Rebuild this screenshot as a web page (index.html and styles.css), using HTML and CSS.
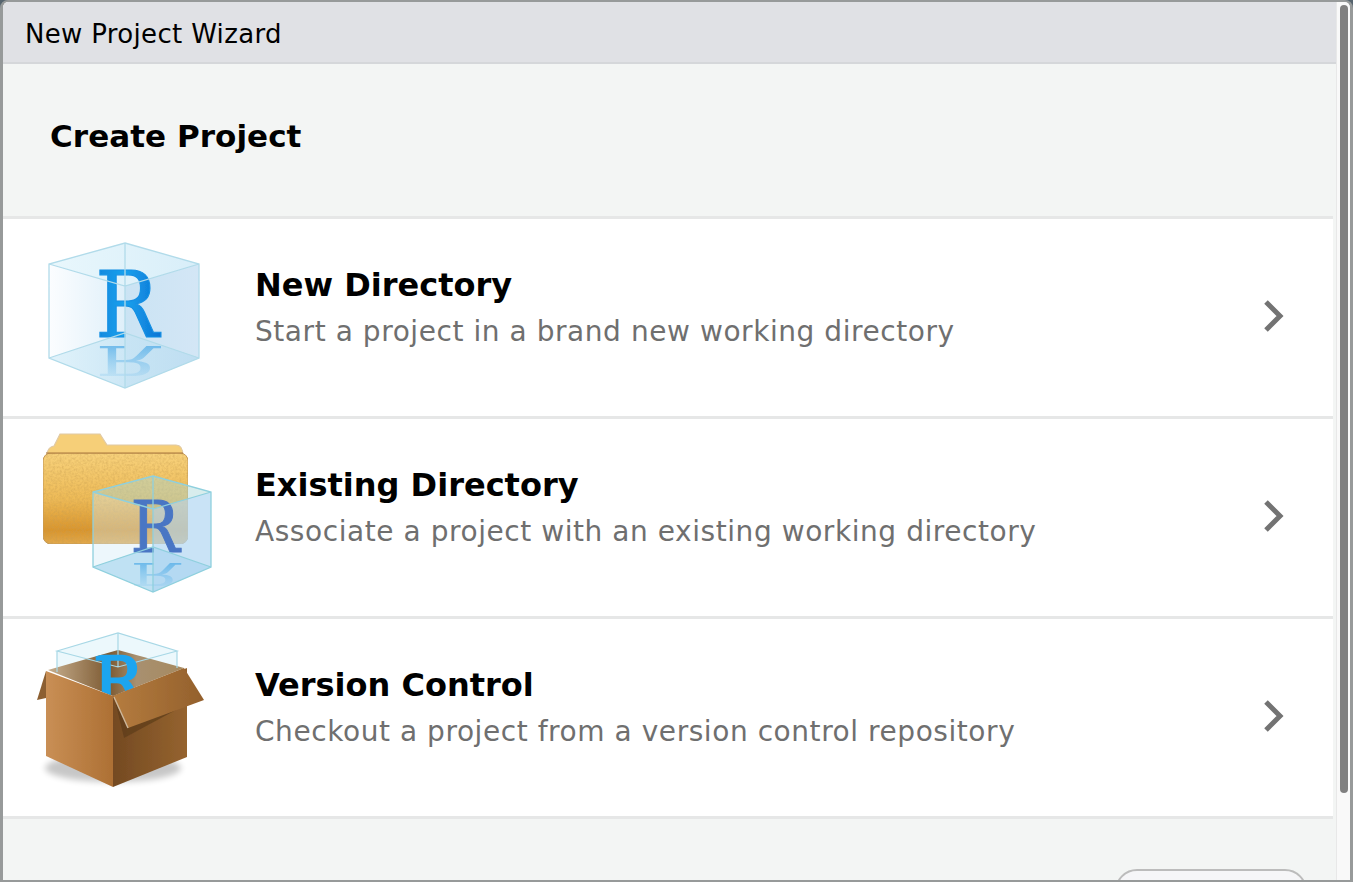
FILE: index.html
```html
<!DOCTYPE html>
<html lang="en">
<head>
<meta charset="utf-8">
<title>New Project Wizard</title>
<link rel="stylesheet" href="styles.css">
</head>
<body>
<svg class="defs" width="0" height="0" aria-hidden="true">
  <defs>
    <linearGradient id="leftFace" x1="0" x2="1" y1="0" y2="0"><stop offset="0" stop-color="#fbfdff"/><stop offset="1" stop-color="#d9edf9"/></linearGradient>
    <linearGradient id="rightFace" x1="0" x2="1" y1="0" y2="0"><stop offset="0" stop-color="#c5e1f3"/><stop offset="1" stop-color="#cfe4f5"/></linearGradient>
    <linearGradient id="topFace" x1="0" x2="1" y1="0" y2="0"><stop offset="0" stop-color="#e9f7fc"/><stop offset="1" stop-color="#d8eef9"/></linearGradient>
    <linearGradient id="floorFace" x1="0" x2="1" y1="0" y2="0"><stop offset="0" stop-color="#d8eff9"/><stop offset="1" stop-color="#b9dcf0"/></linearGradient>
    <linearGradient id="rBlue" x1="0" x2="1" y1="0" y2="0"><stop offset="0" stop-color="#0f86dc"/><stop offset=".45" stop-color="#1aa2ee"/><stop offset="1" stop-color="#0b74d4"/></linearGradient>
    <linearGradient id="rFade" x1="0" x2="0" y1="0" y2="1"><stop offset="0" stop-color="#8ccbef" stop-opacity=".1"/><stop offset="1" stop-color="#4aa8e6" stop-opacity=".95"/></linearGradient>
    <linearGradient id="folderFront" x1="0" x2="0" y1="0" y2="1"><stop offset="0" stop-color="#f8d27c"/><stop offset=".5" stop-color="#eebb58"/><stop offset=".85" stop-color="#d9952d"/><stop offset="1" stop-color="#e2a94c"/></linearGradient>
    <linearGradient id="boxLeft" x1="0" x2="1" y1="0" y2="0"><stop offset="0" stop-color="#c98f55"/><stop offset="1" stop-color="#ad7034"/></linearGradient>
    <linearGradient id="boxRight" x1="0" x2="1" y1="0" y2="0"><stop offset="0" stop-color="#744a22"/><stop offset="1" stop-color="#95632f"/></linearGradient>
    <linearGradient id="boxFlap" x1="0" x2="1" y1="0" y2="0"><stop offset="0" stop-color="#b57c3f"/><stop offset="1" stop-color="#93602c"/></linearGradient>
    <linearGradient id="boxInside" x1="0" x2="1" y1="0" y2="0"><stop offset="0" stop-color="#c6ae8e"/><stop offset=".45" stop-color="#7d5a32"/><stop offset=".65" stop-color="#a89070"/><stop offset="1" stop-color="#a68a60"/></linearGradient>
    <filter id="soft" x="-5%" y="-5%" width="110%" height="110%"><feGaussianBlur stdDeviation=".45"/></filter>
    <filter id="shadow" x="-20%" y="-50%" width="140%" height="200%"><feGaussianBlur stdDeviation="3"/></filter>
    <filter id="grain" x="0" y="0" width="100%" height="100%">
      <feTurbulence type="fractalNoise" baseFrequency=".45" numOctaves="2" seed="4"/>
      <feColorMatrix values="0 0 0 0 .55  0 0 0 0 .33  0 0 0 0 .08  .9 0 0 0 -.32"/>
      <feComposite in2="SourceAlpha" operator="in"/>
      <feMerge><feMergeNode in="SourceGraphic"/><feMergeNode/></feMerge>
    </filter>
  </defs>
</svg>
<div class="window">
  <main class="dialog">
    <div class="titlebar">New Project Wizard</div>
    <div class="header"><h1 class="header-title">Create Project</h1></div>
    <ul class="options">
      <li class="option">
        <svg class="option-icon" viewBox="30 219 190 200" aria-hidden="true">
          <g filter="url(#soft)">
            <polygon points="49,358 125,333 199,358 125,388" fill="url(#floorFace)"/>
            <polygon points="49,264 125,286 125,388 49,358" fill="url(#leftFace)" opacity=".85"/>
            <polygon points="125,286 199,264 199,358 125,388" fill="url(#rightFace)" opacity=".9"/>
            <polygon points="125,243 199,264 125,286 49,264" fill="url(#topFace)"/>
            <polygon points="49,358 125,333 199,358 125,388" fill="url(#floorFace)" opacity=".7"/>
            <text class="logo-r" transform="translate(127 337) scale(.92 1)" text-anchor="middle" font-size="92" fill="url(#rBlue)" stroke="#1590e4" stroke-width="1.2">R</text>
            <text class="logo-r" transform="translate(127 346) scale(.92 -.45)" text-anchor="middle" font-size="92" fill="url(#rFade)">R</text>
            <path d="M125 243L199 264V358L125 388L49 358V264ZM49 264L125 286L199 264M125 243V388M49 358L125 333L199 358" fill="none" stroke="#b1dbea" stroke-width="1.3"/>
          </g>
        </svg>
        <div class="option-text"><h2 class="option-title">New Directory</h2><p class="option-desc">Start a project in a brand new working directory</p></div>
        <svg class="chevron" viewBox="0 0 24 36" aria-hidden="true"><path d="M4 4L18 18L4 32" fill="none" stroke="#737373" stroke-width="5"/></svg>
      </li>
      <li class="option">
        <svg class="option-icon" viewBox="30 419 190 200" aria-hidden="true">
          <g filter="url(#soft)">
            <path d="M46 462Q46 447 54 446L60 434H100L107 445H176Q183 445 183 456L183 470H46Z" fill="#f6cf78" stroke="#e0c9a4" stroke-width="1.2"/>
            <rect x="43" y="453" width="145" height="91" rx="8" fill="url(#folderFront)" stroke="#c59a5c" stroke-width="1" filter="url(#grain)"/>
            <path d="M46 453H183" stroke="#a9793c" stroke-width="1.2"/>
            <polygon points="93,567 153,547 211,567 153,592" fill="#b5dcf1"/>
            <polygon points="93,492 153,509 153,592 93,567" fill="#cfe9f8" opacity=".38"/>
            <polygon points="153,509 211,492 211,567 153,592" fill="#b4d8f3" opacity=".72"/>
            <polygon points="153,476 211,492 153,509 93,492" fill="#a8d8d8" opacity=".45"/>
            <text class="logo-r" transform="translate(155 552) scale(.92 1)" text-anchor="middle" font-size="71" fill="#4a76c4" stroke="#4a76c4" stroke-width="1">R</text>
            <text class="logo-r" transform="translate(155 563) scale(.92 -.45)" text-anchor="middle" font-size="71" fill="url(#rFade)">R</text>
            <path d="M153 476L211 492V567L153 592L93 567V492ZM93 492L153 509L211 492M153 476V592M93 567L153 547L211 567" fill="none" stroke="#8fd0de" stroke-width="1.3"/>
          </g>
        </svg>
        <div class="option-text"><h2 class="option-title">Existing Directory</h2><p class="option-desc">Associate a project with an existing working directory</p></div>
        <svg class="chevron" viewBox="0 0 24 36" aria-hidden="true"><path d="M4 4L18 18L4 32" fill="none" stroke="#737373" stroke-width="5"/></svg>
      </li>
      <li class="option">
        <svg class="option-icon" viewBox="30 619 190 200" aria-hidden="true">
          <clipPath id="boxMouth"><polygon points="48,670 118,650 184,668 113,696"/></clipPath>
          <g filter="url(#soft)">
            <ellipse cx="113" cy="768" rx="68" ry="14" fill="#000" opacity=".22" filter="url(#shadow)"/>
            <polygon points="57,651 118,633 177,651 177,668 118,690 57,668" fill="#e6f5fb" opacity=".75"/>
            <polygon points="48,670 118,650 184,668 113,696" fill="url(#boxInside)"/>
            <path d="M57 651L118 633L177 651L118 667ZM118 633V667M57 651V672M177 651V668" fill="none" stroke="#a8d8e6" stroke-width="1.2"/>
            <g clip-path="url(#boxMouth)">
              <text class="logo-r" x="118" y="704" text-anchor="middle" font-size="66" fill="#1ea5f0" stroke="#1ea5f0" stroke-width="2.4">R</text>
            </g>
            <polygon points="46,671 113,696 113,787 46,756" fill="url(#boxLeft)"/>
            <polygon points="113,696 187,668 187,757 113,787" fill="url(#boxRight)"/>
            <polygon points="46,671 37,700 46,698" fill="#8c5f30"/>
            <polygon points="116,705 187,680 187,704 124,738" fill="#5f3e1c" opacity=".75"/>
            <polygon points="113,696 184,668 204,700 128,728" fill="url(#boxFlap)"/>
            <path d="M114 697L128 728" stroke="#cdb79b" stroke-width="1.4"/>
          </g>
        </svg>
        <div class="option-text"><h2 class="option-title">Version Control</h2><p class="option-desc">Checkout a project from a version control repository</p></div>
        <svg class="chevron" viewBox="0 0 24 36" aria-hidden="true"><path d="M4 4L18 18L4 32" fill="none" stroke="#737373" stroke-width="5"/></svg>
      </li>
    </ul>
    <footer class="footer"><button class="cancel" type="button" aria-label="Cancel"></button></footer>
  </main>
  <div class="scrollbar"><div class="thumb"></div></div>
</div>
</body>
</html>
```
FILE: styles.css
```css
* { box-sizing: border-box; }
html, body { height: 100%; }
body {
  margin: 0;
  overflow: hidden;
  background: #56646e;
  font-family: "DejaVu Sans", "Liberation Sans", sans-serif;
  color: #000;
}
.defs { position: absolute; }
.window {
  display: flex;
  height: 882px;
  border: solid #979a9a;
  border-width: 2px 3px 2px 3px;
  border-radius: 8px 8px 0 0;
  overflow: hidden;
  background: #f3f5f4;
}
.dialog {
  flex: 0 0 1333px;
  display: flex;
  flex-direction: column;
  overflow: hidden;
  background: #f3f5f4;
}
.titlebar {
  flex: 0 0 62px;
  padding: 14px 0 0 22px;
  background: #e0e1e5;
  border-bottom: 2px solid #d5d7da;
  font-size: 26px;
  line-height: 36px;
  letter-spacing: .33px;
}
.header {
  flex: 0 0 155px;
  padding: 51px 0 0 47px;
  border-bottom: 3px solid #e6e7e7;
  margin-right: 3px;
}
.header-title {
  margin: 0;
  font-size: 31px;
  line-height: 42px;
  font-weight: 700;
  letter-spacing: .05px;
}
.options { list-style: none; margin: 0 3px 0 0; padding: 0; }
.option {
  display: flex;
  align-items: center;
  height: 200px;
  background: #fff;
  border-bottom: 3px solid #e6e7e7;
}
.option-icon { flex: 0 0 190px; width: 190px; height: 200px; margin: 0 35px 0 27px; align-self: flex-start; }
.option-text { flex: 1; padding-bottom: 21px; }
.option-title { margin: 0; font-size: 32px; line-height: 40px; font-weight: 700; }
.option-desc { margin: 10px 0 0; font-size: 28px; line-height: 34px; color: #6f6f6f; letter-spacing: .56px; }
.chevron { flex: 0 0 24px; width: 24px; height: 36px; margin: 0 47px 4px 0; }
.logo-r { font-family: "DejaVu Serif", "Liberation Serif", serif; }
.footer { flex: 1; position: relative; }
.cancel {
  position: absolute;
  left: 1112px;
  top: 50px;
  width: 192px;
  height: 50px;
  background: #f6f6f8;
  border: 2px solid #bcbcbc;
  border-radius: 22px;
}
.scrollbar {
  flex: 1;
  padding: 3px 2px 0 3px;
  background: #f9f9f9;
  border-left: 1px solid #e8e8e8;
}
.thumb { width: 8px; height: 788px; background: #808080; border-radius: 4px; }
```
